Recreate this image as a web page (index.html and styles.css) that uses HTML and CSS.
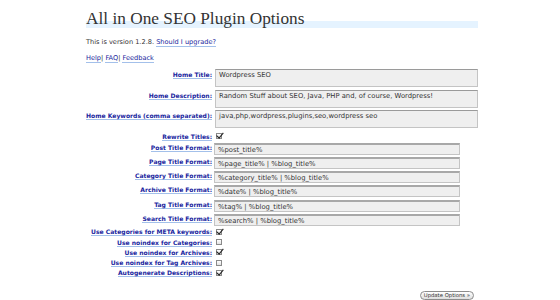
FILE: index.html
```html
<!DOCTYPE html>
<html lang="en">
<head>
    <meta charset="UTF-8">
    <title>All in One SEO Plugin Options</title>
    <link rel="stylesheet" href="styles.css">
</head>
<body>
    <div class="wrap">
        <h2>All in One SEO Plugin Options</h2>

        <p class="version">This is version 1.2.8. <a href="#">Should I upgrade?</a></p>
        <p class="help"><a href="#">Help</a>| <a href="#">FAQ</a>| <a href="#">Feedback</a></p>

        <form>
            <table class="form-table">
                <tr class="area-row">
                    <td class="label"><a href="#">Home Title:</a></td>
                    <td class="field"><div class="textarea">Wordpress SEO</div></td>
                </tr>
                <tr class="area-row">
                    <td class="label"><a href="#">Home Description:</a></td>
                    <td class="field"><div class="textarea">Random Stuff about SEO, Java, PHP and, of course, Wordpress!</div></td>
                </tr>
                <tr class="area-row">
                    <td class="label"><a href="#">Home Keywords (comma separated):</a></td>
                    <td class="field"><div class="textarea">java,php,wordpress,plugins,seo,wordpress seo</div></td>
                </tr>
                <tr class="check-row first-check">
                    <td class="label"><a href="#">Rewrite Titles:</a></td>
                    <td class="field"><span class="cb checked"></span></td>
                </tr>
                <tr class="text-row">
                    <td class="label"><a href="#">Post Title Format:</a></td>
                    <td class="field"><div class="text">%post_title%</div></td>
                </tr>
                <tr class="text-row">
                    <td class="label"><a href="#">Page Title Format:</a></td>
                    <td class="field"><div class="text">%page_title% | %blog_title%</div></td>
                </tr>
                <tr class="text-row">
                    <td class="label"><a href="#">Category Title Format:</a></td>
                    <td class="field"><div class="text">%category_title% | %blog_title%</div></td>
                </tr>
                <tr class="text-row">
                    <td class="label"><a href="#">Archive Title Format:</a></td>
                    <td class="field"><div class="text">%date% | %blog_title%</div></td>
                </tr>
                <tr class="text-row">
                    <td class="label"><a href="#">Tag Title Format:</a></td>
                    <td class="field"><div class="text">%tag% | %blog_title%</div></td>
                </tr>
                <tr class="text-row last-text">
                    <td class="label"><a href="#">Search Title Format:</a></td>
                    <td class="field"><div class="text">%search% | %blog_title%</div></td>
                </tr>
                <tr class="check-row">
                    <td class="label"><a href="#">Use Categories for META keywords:</a></td>
                    <td class="field"><span class="cb checked"></span></td>
                </tr>
                <tr class="check-row">
                    <td class="label"><a href="#">Use noindex for Categories:</a></td>
                    <td class="field"><span class="cb"></span></td>
                </tr>
                <tr class="check-row">
                    <td class="label"><a href="#">Use noindex for Archives:</a></td>
                    <td class="field"><span class="cb checked"></span></td>
                </tr>
                <tr class="check-row">
                    <td class="label"><a href="#">Use noindex for Tag Archives:</a></td>
                    <td class="field"><span class="cb"></span></td>
                </tr>
                <tr class="check-row">
                    <td class="label"><a href="#">Autogenerate Descriptions:</a></td>
                    <td class="field"><span class="cb checked"></span></td>
                </tr>
            </table>

            <p class="submit"><span class="button">Update Options &raquo;</span></p>
        </form>
    </div>
</body>
</html>
```

FILE: styles.css
```css
* {
    box-sizing: border-box;
}

body {
    margin: 0;
    background: #ffffff;
    color: #333333;
    font-family: 'DejaVu Sans', Verdana, sans-serif;
    font-size: 6.6px;
}

a {
    color: #1a1f9e;
    text-decoration: none;
    border-bottom: 1px solid #a3c0ea;
}

.wrap {
    margin-left: 86px;
    width: 392px;
}

/* heading with the light blue band behind the lower part */
h2 {
    margin: 0;
    padding-top: 7px;
    height: 31px;
    line-height: 24px;
    font-family: 'Liberation Serif', 'Times New Roman', serif;
    font-size: 17.3px;
    font-weight: normal;
    color: #333333;
    background: linear-gradient(to bottom, transparent 21px, #e5f3ff 21px, #e5f3ff 28px, transparent 28px);
}

.version {
    margin: 5.5px 0 0;
    line-height: 10px;
}

.help {
    margin: 6px 0 0;
    line-height: 10px;
}

.form-table {
    margin-top: 6.5px;
    border-collapse: separate;
    border-spacing: 0;
    table-layout: fixed;
}

.form-table td {
    padding: 0;
}

.label {
    width: 126px;
    text-align: right;
    vertical-align: top;
    font-size: 6.05px;
    font-weight: bold;
    white-space: nowrap;
}

.field {
    width: 266px;
    padding-left: 3px !important;
    vertical-align: top;
    font-size: 6.8px;
}

.area-row td {
    padding-bottom: 2.5px;
}

.area-row .label {
    padding-top: 1px;
    line-height: 10px;
}

.textarea {
    width: 263px;
    height: 18px;
    padding: 1px 3px;
    line-height: 9px;
    background: #efefef;
    border: 1px solid #c4c4c4;
    border-top-color: #9a9a9a;
    white-space: nowrap;
    overflow: hidden;
}

.text-row td {
    padding-bottom: 2.2px;
}

.last-text td {
    padding-bottom: 1.5px;
}

.text-row .label {
    line-height: 9px;
}

.text-row .field {
    padding-left: 2px !important;
}

.text {
    width: 246px;
    height: 12px;
    padding: 0 3px;
    line-height: 10px;
    background: #efefef;
    border: 1px solid #c4c4c4;
    border-top: 2px solid #a8a8a8;
    white-space: nowrap;
    overflow: hidden;
}

.check-row td {
    height: 10.3px;
    line-height: 10.3px;
    vertical-align: middle;
}

.first-check td {
    height: 12px;
    padding-top: 1px;
    padding-bottom: 1px;
}

.cb {
    display: inline-block;
    position: relative;
    width: 6px;
    height: 6px;
    margin-left: 1px;
    vertical-align: -0.5px;
    background: linear-gradient(#ffffff, #e2e2e2);
    border: 1px solid #8a8a8a;
}

/* check mark sits over the box and pokes above it */
.cb.checked::after {
    content: "";
    position: absolute;
    left: 1px;
    top: -3px;
    width: 2.5px;
    height: 6px;
    border-right: 1.4px solid #222222;
    border-bottom: 1.4px solid #222222;
    transform: rotate(40deg);
}

.submit {
    margin: 12px 0 0;
    text-align: right;
    padding-right: 4px;
}

.button {
    display: inline-block;
    height: 9px;
    padding: 0 3px;
    line-height: 7px;
    font-size: 5.3px;
    color: #333333;
    background: linear-gradient(#ffffff, #dedede);
    border: 1px solid #8c8c8c;
    border-radius: 5px;
}
```
